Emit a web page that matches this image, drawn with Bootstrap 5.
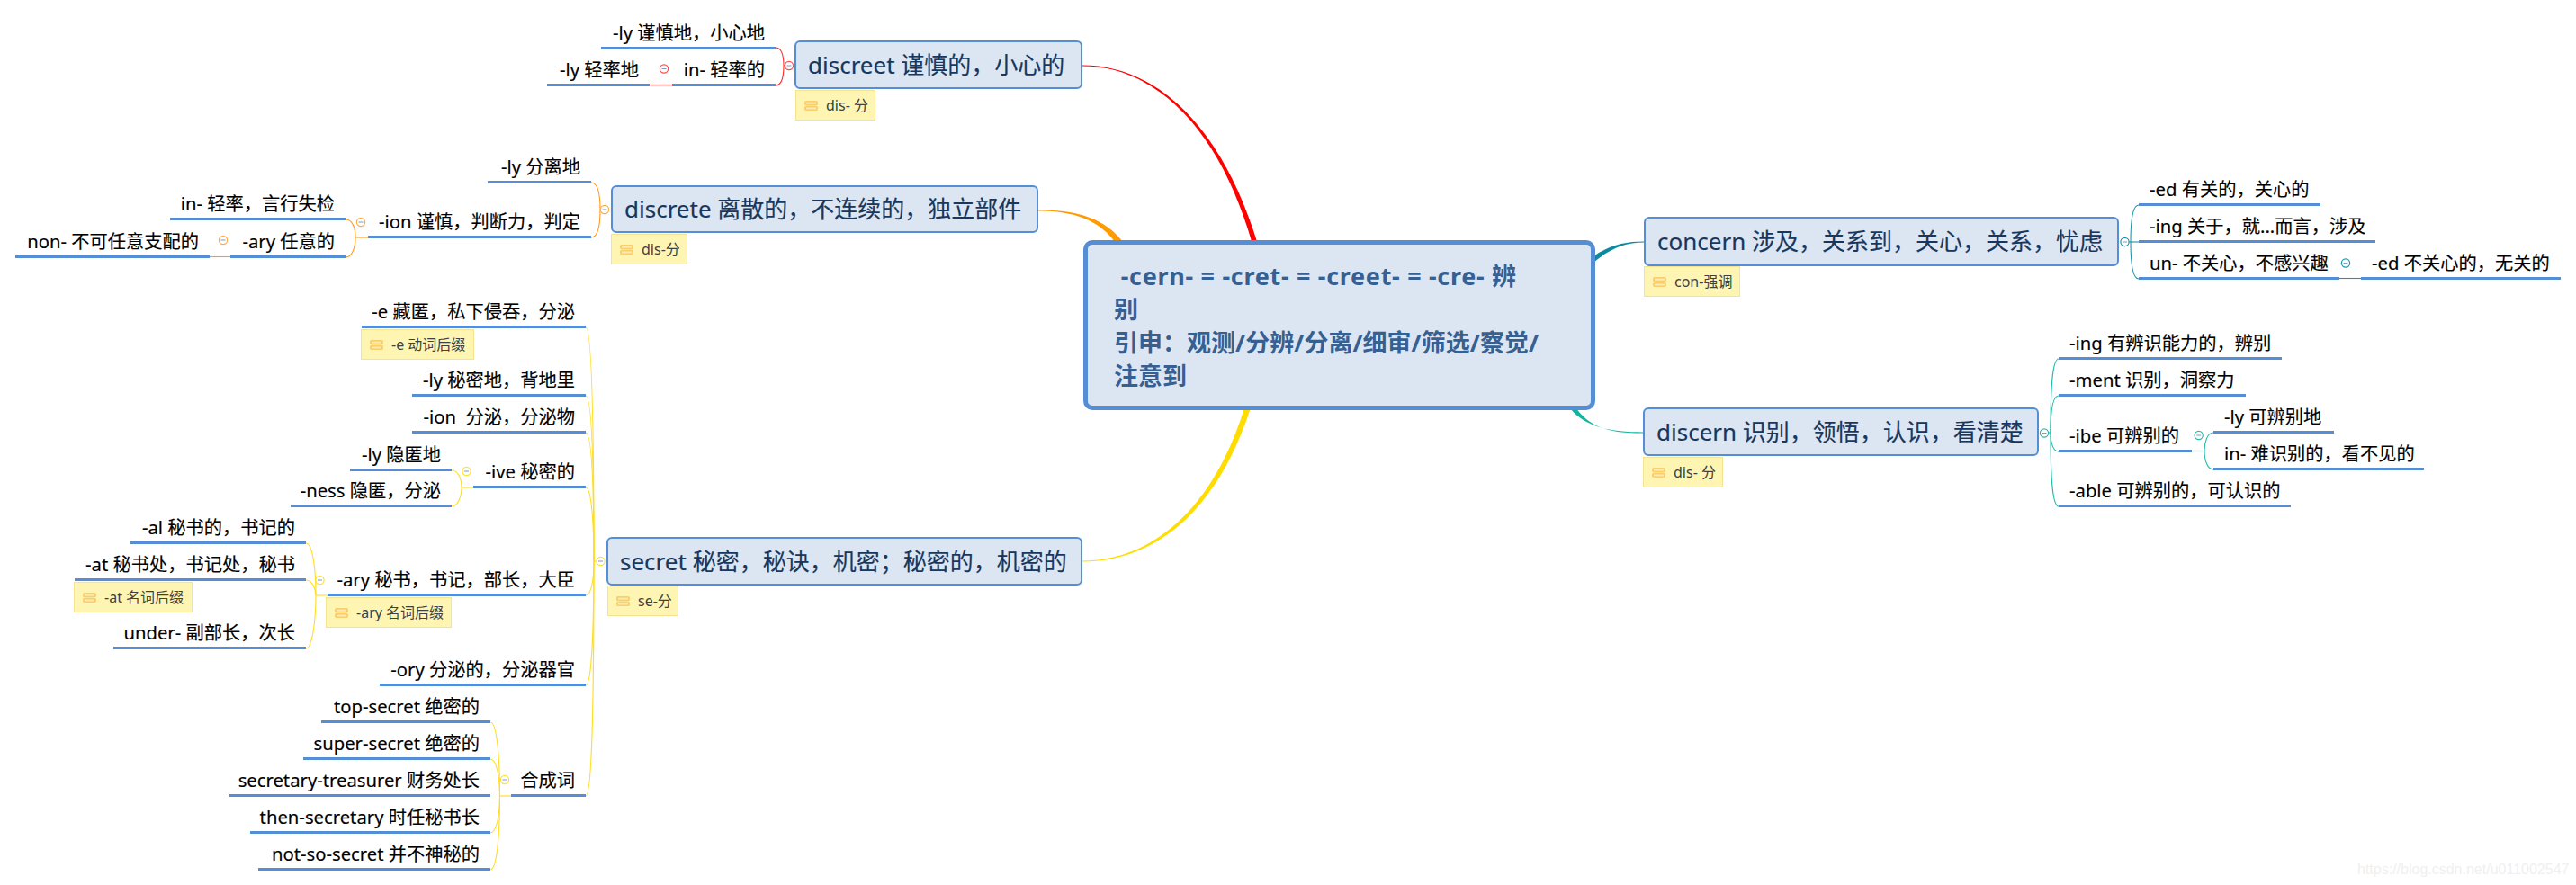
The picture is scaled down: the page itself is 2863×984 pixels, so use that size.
<!doctype html>
<html lang="zh">
<head>
<meta charset="utf-8">
<title>-cern- mind map</title>
<link rel="stylesheet" href="https://cdn.jsdelivr.net/npm/bootstrap@5.3.0/dist/css/bootstrap.min.css">
<style>
html,body{margin:0;background:#fff;overflow:hidden}
body{font-family:"Noto Sans","Noto Sans CJK SC",sans-serif}
.mm-canvas{width:2863px;height:984px;background:#fff}
.mm-lines{left:0;top:0}
.mm-node{height:33px;border-bottom:3px solid #558ed5;padding:0 12px;font-size:20.25px;line-height:28px;color:#000;-webkit-text-stroke:.15px #000}
.mm-topic{border:2px solid #558ed5;border-radius:6px;background:#dce6f2;color:#17375e;font-size:26px;padding:0 13px;-webkit-text-stroke:.15px #17375e}
.mm-root{border:5px solid #558ed5;border-radius:10px;background:#dce6f2;color:#376092;font-size:27px;font-weight:700;line-height:37px;padding:0 29px;width:569px;height:189px;left:1204px;top:267px}
.mm-first{letter-spacing:.7px}
.mm-note{height:34px;background:#fff5b3;border:1px solid #f6e38f;color:#404040;font-size:16px;padding-left:9px;gap:9px}
.mm-mark{left:2620px;top:955px;font-family:"Liberation Sans",sans-serif;font-size:16px;color:#f0f0f0}
.mm-br{fill:none;stroke-width:1.1}
.mm-minus{stroke:#7c9cc4;stroke-width:1.2}
.mm-dot{fill:#fff;stroke-width:1.2}
</style>
</head>
<body>
<div class="mm-canvas position-relative overflow-hidden">
<svg class="mm-lines position-absolute" width="2863" height="984" viewBox="0 0 2863 984">
  <defs>
    <g id="mm-ico"><rect x="0" y="0" width="15" height="5.2" rx="2" fill="#f9cf6b"/><rect x="0" y="5.8" width="15" height="5.2" rx="2" fill="#f9cf6b"/><rect x="2" y="1.7" width="11" height="2" fill="#fdeab0"/><rect x="2" y="7.5" width="11" height="2" fill="#fdeab0"/></g>
  </defs>
  <!-- main branches -->
  <path fill="#ff0000" d="M1203 72.4C1290.5 72.4 1361.5 149 1398 272L1392 272C1358.5 151 1289.5 73.6 1203 73.6Z"/>
  <path fill="#ff9a00" d="M1154 233.4C1192 233.4 1228 240 1250 272L1241 272C1222 243 1190 234.6 1154 234.6Z"/>
  <path fill="#ffdd00" d="M1203 624.6C1281 624.6 1352 572 1390.5 452L1383.5 452C1348 568 1279 623.4 1203 623.4Z"/>
  <path fill="#0b8ba0" d="M1827 268.4C1805 268.4 1785 273 1766 289L1770 293C1788 277 1806 269.6 1827 269.6Z"/>
  <path fill="#10b5a0" d="M1826 481.6C1790 481.6 1766 476 1750 451L1745 454C1762 475 1790 480.4 1826 480.4Z"/>

  <!-- red -->
  <g class="mm-br" stroke="#ff2a2a">
    <path d="M871 73C871 60 868 53 862 53"/><path d="M871 73C871 86 868 95 862 95"/><path d="M871 73H877"/>
    <path d="M722 94.5H747"/>
  </g>
  <!-- orange -->
  <g class="mm-br" stroke="#ff9a1f">
    <path d="M667 233C667 215 664 203 657 203"/><path d="M667 233C667 251 664 264 657 264"/><path d="M667 233H672"/>
    <path d="M395 264C395 252 391 244 384 244"/><path d="M395 264C395 276 391 286 384 286"/><path d="M395 264H409"/>
    <path d="M233 285.5H256"/>
  </g>
  <!-- yellow -->
  <g class="mm-br" stroke="#ffdd22">
    <path d="M660 624C660 480 658 364 651 364"/><path d="M660 624C660 520 658 440 651 440"/><path d="M660 624C660 540 658 481 651 481"/><path d="M660 624C660 590 658 542 651 542"/>
    <path d="M660 624C660 640 658 662 651 662"/><path d="M660 624C660 690 658 762 651 762"/><path d="M660 624C660 780 658 885 651 885"/><path d="M660 624H667"/>
    <path d="M513 542C513 532 509 523 502 523"/><path d="M513 542C513 552 509 563 502 563"/><path d="M513 542H526"/>
    <path d="M351 662C351 630 347 604 340 604"/><path d="M351 662C351 655 347 645 340 645"/><path d="M351 662C351 690 347 721 340 721"/><path d="M351 662H364"/>
    <path d="M555.5 885C555.5 840 552 803 545 803"/><path d="M555.5 885C555.5 865 552 844 545 844"/><path d="M555.5 885H568"/><path d="M555.5 885C555.5 905 552 926 545 926"/><path d="M555.5 885C555.5 930 552 967 545 967"/>
  </g>
  <!-- teal -->
  <g class="mm-br" stroke="#1b96ab">
    <path d="M2368 269C2368 245 2370 228 2377 228"/><path d="M2368 269H2377"/><path d="M2368 269C2368 293 2370 310 2377 310"/><path d="M2361 269H2368"/>
    <path d="M2600 309.5H2624"/>
  </g>
  <g class="mm-br" stroke="#24bda8">
    <path d="M2279 481C2279 430 2281 399 2288 399"/><path d="M2279 481C2279 460 2281 440 2288 440"/><path d="M2279 481C2279 490 2281 502 2288 502"/><path d="M2279 481C2279 530 2281 563 2288 563"/><path d="M2272 481H2279"/>
    <path d="M2436 501.5H2450"/><path d="M2450 501.5C2450 492 2453 481 2460 481"/><path d="M2450 501.5C2450 511 2453 522 2460 522"/>
  </g>
  <!-- collapse dots -->
  <g class="mm-dot" stroke="#ff4a4a"><circle cx="877" cy="73" r="4.6"/><circle cx="738" cy="76.5" r="4.6"/></g>
  <g class="mm-dot" stroke="#ffab40"><circle cx="672" cy="233" r="4.6"/><circle cx="401" cy="247" r="4.6"/><circle cx="248" cy="267" r="4.6"/></g>
  <g class="mm-dot" stroke="#ffdf3a"><circle cx="667.5" cy="624" r="4.6"/><circle cx="518.5" cy="524" r="4.6"/><circle cx="355.5" cy="645" r="4.6"/><circle cx="561" cy="867" r="4.6"/></g>
  <g class="mm-dot" stroke="#1b96ab"><circle cx="2361.5" cy="269" r="4.6"/><circle cx="2607" cy="292.5" r="4.6"/></g>
  <g class="mm-dot" stroke="#24bda8"><circle cx="2272" cy="481.5" r="4.6"/><circle cx="2443.7" cy="484" r="4.6"/></g>
  <g class="mm-minus">
    <path d="M874.5 73h5M735.5 76.5h5M669.5 233h5M398.5 247h5M245.5 267h5M665 624h5M516 524h5M353 645h5M558.5 867h5M2359 269h5M2604.5 292.5h5M2269.5 481.5h5M2441.2 484h5"/>
  </g>
</svg>

<!-- root -->
<div class="mm-root position-absolute d-flex align-items-center text-nowrap"><div><span class="mm-first">&nbsp;-cern- = -cret- = -creet- = -cre- 辨</span><br>别<br>引申：观测/分辨/分离/细审/筛选/察觉/<br>注意到</div></div>

<!-- topics -->
<div class="mm-topic position-absolute d-flex align-items-center text-nowrap" style="left:883px;top:45px;width:320px;height:54px">discreet 谨慎的，小心的</div>
<div class="mm-topic position-absolute d-flex align-items-center text-nowrap" style="left:679px;top:206px;width:475px;height:53px">discrete 离散的，不连续的，独立部件</div>
<div class="mm-topic position-absolute d-flex align-items-center text-nowrap" style="left:674px;top:597px;width:529px;height:54px">secret 秘密，秘诀，机密；秘密的，机密的</div>
<div class="mm-topic position-absolute d-flex align-items-center text-nowrap" style="left:1827px;top:241px;width:528px;height:55px">concern 涉及，关系到，关心，关系，忧虑</div>
<div class="mm-topic position-absolute d-flex align-items-center text-nowrap" style="left:1826px;top:453px;width:440px;height:54px">discern 识别，领悟，认识，看清楚</div>

<!-- notes -->
<div class="mm-note position-absolute d-flex align-items-center text-nowrap" style="left:884px;top:100px;width:89px"><svg width="15" height="11"><use href="#mm-ico"/></svg><span>dis- 分</span></div>
<div class="mm-note position-absolute d-flex align-items-center text-nowrap" style="left:679px;top:260px;width:85px"><svg width="15" height="11"><use href="#mm-ico"/></svg><span>dis-分</span></div>
<div class="mm-note position-absolute d-flex align-items-center text-nowrap" style="left:401px;top:366px;width:126px"><svg width="15" height="11"><use href="#mm-ico"/></svg><span>-e 动词后缀</span></div>
<div class="mm-note position-absolute d-flex align-items-center text-nowrap" style="left:82px;top:647px;width:132px"><svg width="15" height="11"><use href="#mm-ico"/></svg><span>-at 名词后缀</span></div>
<div class="mm-note position-absolute d-flex align-items-center text-nowrap" style="left:362px;top:664px;width:140px"><svg width="15" height="11"><use href="#mm-ico"/></svg><span>-ary 名词后缀</span></div>
<div class="mm-note position-absolute d-flex align-items-center text-nowrap" style="left:675px;top:651px;width:79px"><svg width="15" height="11"><use href="#mm-ico"/></svg><span>se-分</span></div>
<div class="mm-note position-absolute d-flex align-items-center text-nowrap" style="left:1827px;top:296px;width:107px"><svg width="15" height="11"><use href="#mm-ico"/></svg><span>con-强调</span></div>
<div class="mm-note position-absolute d-flex align-items-center text-nowrap" style="left:1826px;top:508px;width:89px"><svg width="15" height="11"><use href="#mm-ico"/></svg><span>dis- 分</span></div>

<!-- left side nodes -->
<div class="mm-node position-absolute d-flex justify-content-end text-nowrap" style="left:668px;top:22px;width:194px">-ly 谨慎地，小心地</div>
<div class="mm-node position-absolute d-flex justify-content-end text-nowrap" style="left:747px;top:63px;width:115px">in- 轻率的</div>
<div class="mm-node position-absolute d-flex justify-content-end text-nowrap" style="left:608px;top:63px;width:114px">-ly 轻率地</div>
<div class="mm-node position-absolute d-flex justify-content-end text-nowrap" style="left:542px;top:171px;width:115px">-ly 分离地</div>
<div class="mm-node position-absolute d-flex justify-content-end text-nowrap" style="left:409px;top:232px;width:248px">-ion 谨慎，判断力，判定</div>
<div class="mm-node position-absolute d-flex justify-content-end text-nowrap" style="left:189px;top:212px;width:195px">in- 轻率，言行失检</div>
<div class="mm-node position-absolute d-flex justify-content-end text-nowrap" style="left:256px;top:254px;width:128px">-ary 任意的</div>
<div class="mm-node position-absolute d-flex justify-content-end text-nowrap" style="left:17px;top:254px;width:216px">non- 不可任意支配的</div>
<div class="mm-node position-absolute d-flex justify-content-end text-nowrap" style="left:402px;top:332px;width:249px">-e 藏匿，私下侵吞，分泌</div>
<div class="mm-node position-absolute d-flex justify-content-end text-nowrap" style="left:458px;top:408px;width:193px">-ly 秘密地，背地里</div>
<div class="mm-node position-absolute d-flex justify-content-end text-nowrap" style="left:458px;top:449px;width:193px">-ion&nbsp; 分泌，分泌物</div>
<div class="mm-node position-absolute d-flex justify-content-end text-nowrap" style="left:526px;top:510px;width:125px">-ive 秘密的</div>
<div class="mm-node position-absolute d-flex justify-content-end text-nowrap" style="left:389px;top:491px;width:113px">-ly 隐匿地</div>
<div class="mm-node position-absolute d-flex justify-content-end text-nowrap" style="left:323px;top:531px;width:179px">-ness 隐匿，分泌</div>
<div class="mm-node position-absolute d-flex justify-content-end text-nowrap" style="left:364px;top:630px;width:287px">-ary 秘书，书记，部长，大臣</div>
<div class="mm-node position-absolute d-flex justify-content-end text-nowrap" style="left:145px;top:572px;width:195px">-al 秘书的，书记的</div>
<div class="mm-node position-absolute d-flex justify-content-end text-nowrap" style="left:83px;top:613px;width:257px">-at 秘书处，书记处，秘书</div>
<div class="mm-node position-absolute d-flex justify-content-end text-nowrap" style="left:126px;top:689px;width:214px">under- 副部长，次长</div>
<div class="mm-node position-absolute d-flex justify-content-end text-nowrap" style="left:422px;top:730px;width:229px">-ory 分泌的，分泌器官</div>
<div class="mm-node position-absolute d-flex justify-content-end text-nowrap" style="left:568px;top:853px;width:83px">合成词</div>
<div class="mm-node position-absolute d-flex justify-content-end text-nowrap" style="left:357px;top:771px;width:188px">top-secret 绝密的</div>
<div class="mm-node position-absolute d-flex justify-content-end text-nowrap" style="left:337px;top:812px;width:208px">super-secret 绝密的</div>
<div class="mm-node position-absolute d-flex justify-content-end text-nowrap" style="left:255px;top:853px;width:290px">secretary-treasurer 财务处长</div>
<div class="mm-node position-absolute d-flex justify-content-end text-nowrap" style="left:278px;top:894px;width:267px">then-secretary 时任秘书长</div>
<div class="mm-node position-absolute d-flex justify-content-end text-nowrap" style="left:287px;top:935px;width:258px">not-so-secret 并不神秘的</div>

<!-- right side nodes -->
<div class="mm-node position-absolute text-nowrap" style="left:2377px;top:196px;width:202px">-ed 有关的，关心的</div>
<div class="mm-node position-absolute text-nowrap" style="left:2377px;top:237px;width:263px">-ing 关于，就...而言，涉及</div>
<div class="mm-node position-absolute text-nowrap" style="left:2377px;top:278px;width:223px">un- 不关心，不感兴趣</div>
<div class="mm-node position-absolute text-nowrap" style="left:2624px;top:278px;width:222px">-ed 不关心的，无关的</div>
<div class="mm-node position-absolute text-nowrap" style="left:2288px;top:367px;width:248px">-ing 有辨识能力的，辨别</div>
<div class="mm-node position-absolute text-nowrap" style="left:2288px;top:408px;width:208px">-ment 识别，洞察力</div>
<div class="mm-node position-absolute text-nowrap" style="left:2288px;top:470px;width:148px">-ibe 可辨别的</div>
<div class="mm-node position-absolute text-nowrap" style="left:2460px;top:449px;width:134px">-ly 可辨别地</div>
<div class="mm-node position-absolute text-nowrap" style="left:2460px;top:490px;width:234px">in- 难识别的，看不见的</div>
<div class="mm-node position-absolute text-nowrap" style="left:2288px;top:531px;width:258px">-able 可辨别的，可认识的</div>

<div class="mm-mark position-absolute">https://blog.csdn.net/u011002547</div>
</div>
<script src="https://cdn.jsdelivr.net/npm/bootstrap@5.3.0/dist/js/bootstrap.bundle.min.js"></script>
</body>
</html>
